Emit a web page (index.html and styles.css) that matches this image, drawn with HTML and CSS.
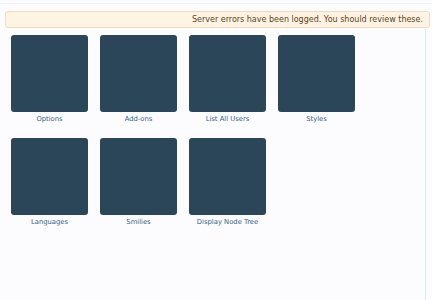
FILE: index.html
```html
<!DOCTYPE html>
<html>
<head>
<meta charset="utf-8">
<link rel="stylesheet" href="styles.css">
</head>
<body>
<div class="topbar"></div>
<div class="notice">Server errors have been logged. You should review these.</div>
<div class="main">
  <div class="grid">
    <div class="item"><div class="tile"></div><div class="label">Options</div></div>
    <div class="item"><div class="tile"></div><div class="label">Add-ons</div></div>
    <div class="item"><div class="tile"></div><div class="label">List All Users</div></div>
    <div class="item"><div class="tile"></div><div class="label">Styles</div></div>
    <div class="item"><div class="tile"></div><div class="label">Languages</div></div>
    <div class="item"><div class="tile"></div><div class="label">Smilies</div></div>
    <div class="item"><div class="tile"></div><div class="label">Display Node Tree</div></div>
  </div>
</div>
</body>
</html>
```
FILE: styles.css
```css
html, body {
  margin: 0;
  padding: 0;
  background: #fcfcfe;
  height: 100%;
}
body {
  font-family: "DejaVu Sans", Verdana, sans-serif;
  overflow: hidden;
}
.topbar {
  height: 3px;
  border-bottom: 1px solid #eef0f4;
}
.notice {
  margin: 7px 2px 0 5px;
  height: 15px;
  line-height: 15px;
  background: #fff4e4;
  border: 1px solid #f0dcbc;
  border-radius: 3px;
  color: #5e4214;
  font-size: 8px;
  text-align: right;
  padding-right: 6px;
}
.main {
  width: 414px;
  height: 264px;
  padding: 7px 0 0 11px;
  margin-top: 1px;
  border-right: 1px solid #d8eef0;
}
.grid {
  display: grid;
  grid-template-columns: repeat(4, 77px);
  column-gap: 12px;
  row-gap: 13px;
  margin-top: -1px;
}
.item {
  display: flex;
  flex-direction: column;
}
.tile {
  width: 77px;
  height: 77px;
  background: #2c4659;
  border-radius: 3px;
}
.label {
  margin-top: 1px;
  line-height: 12px;
  font-size: 6.8px;
  color: #33628a;
  text-align: center;
  white-space: nowrap;
}
```
